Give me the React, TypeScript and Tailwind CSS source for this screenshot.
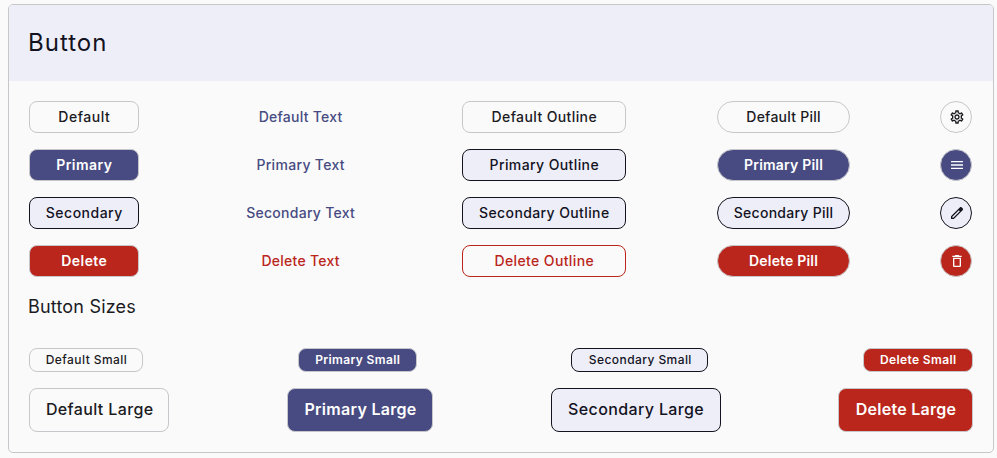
import { useLayoutEffect, useRef, useState } from "react";
import type { ReactNode } from "react";
import { MdDeleteOutline, MdMenu, MdOutlineSettings } from "react-icons/md";

type Tone = "default" | "primary" | "secondary" | "danger";
type Kind = "solid" | "text" | "outline" | "pill";

const SOLID: Record<Tone, string> = {
  default: "border-[#c7c7cb] bg-[#fafafa] font-medium text-[#1b1b1f]",
  primary: "border-[#c7c7cb] bg-[#474b82] font-semibold text-white",
  secondary: "border-[#13131f] bg-[#eeeef8] font-medium text-[#13131f]",
  danger: "border-[#c7c7cb] bg-[#ba261b] font-semibold text-white",
};

const OUTLINE: Record<Tone, string> = {
  default: "border-[#c7c7cb] font-medium text-[#1b1b1f]",
  primary: "border-[#13131f] bg-[#eeeef8] font-medium text-[#13131f]",
  secondary: "border-[#13131f] bg-[#eeeef8] font-medium text-[#13131f]",
  danger: "border-[#ba261b] font-medium text-[#ba261b]",
};

const TEXT: Record<Tone, string> = {
  default: "border-transparent font-medium text-[#474b82]",
  primary: "border-transparent font-medium text-[#474b82]",
  secondary: "border-transparent font-medium text-[#474b82]",
  danger: "border-transparent font-medium text-[#ba261b]",
};

function toneClass(kind: Kind, tone: Tone) {
  if (kind === "text") return TEXT[tone];
  if (kind === "outline") return OUTLINE[tone];
  return SOLID[tone];
}

/* Spreads the letters of a caption evenly over a given width. */
function Caption({ text, width }: { text: string; width: number }) {
  const ref = useRef<HTMLSpanElement>(null);
  const [tracking, setTracking] = useState(0);
  useLayoutEffect(() => {
    if (!ref.current) return;
    const natural = ref.current.getBoundingClientRect().width;
    setTracking((t) => t + (width - natural) / text.length);
  }, [text, width]);
  return (
    <span ref={ref} className="whitespace-nowrap" style={{ letterSpacing: `${tracking}px` }}>
      {text}
    </span>
  );
}

interface Item {
  tone: Tone;
  label: string;
  width: number;
}

const COLUMNS: { kind: Kind; size: string; items: Item[] }[] = [
  {
    kind: "solid",
    size: "w-[109.6px] rounded-lg",
    items: [
      { tone: "default", label: "Default", width: 52 },
      { tone: "primary", label: "Primary", width: 56 },
      { tone: "secondary", label: "Secondary", width: 77 },
      { tone: "danger", label: "Delete", width: 46 },
    ],
  },
  {
    kind: "text",
    size: "w-[141.8px] rounded-lg",
    items: [
      { tone: "default", label: "Default Text", width: 84 },
      { tone: "primary", label: "Primary Text", width: 88.5 },
      { tone: "secondary", label: "Secondary Text", width: 109 },
      { tone: "danger", label: "Delete Text", width: 78.5 },
    ],
  },
  {
    kind: "outline",
    size: "w-[164.2px] rounded-lg",
    items: [
      { tone: "default", label: "Default Outline", width: 105.5 },
      { tone: "primary", label: "Primary Outline", width: 109.5 },
      { tone: "secondary", label: "Secondary Outline", width: 130.5 },
      { tone: "danger", label: "Delete Outline", width: 99.5 },
    ],
  },
  {
    kind: "pill",
    size: "w-[133px] rounded-full",
    items: [
      { tone: "default", label: "Default Pill", width: 74.5 },
      { tone: "primary", label: "Primary Pill", width: 79 },
      { tone: "secondary", label: "Secondary Pill", width: 99.5 },
      { tone: "danger", label: "Delete Pill", width: 69 },
    ],
  },
];

const SMALL: (Item & { size: string })[] = [
  { tone: "default", label: "Default Small", width: 81.5, size: "w-[114px]" },
  { tone: "primary", label: "Primary Small", width: 85, size: "w-[119px]" },
  { tone: "secondary", label: "Secondary Small", width: 103, size: "w-[137px]" },
  { tone: "danger", label: "Delete Small", width: 76.5, size: "w-[109.6px]" },
];

const LARGE: (Item & { size: string })[] = [
  { tone: "default", label: "Default Large", width: 107.5, size: "w-[140.4px]" },
  { tone: "primary", label: "Primary Large", width: 112, size: "w-[145.6px]" },
  { tone: "secondary", label: "Secondary Large", width: 136, size: "w-[170px]" },
  { tone: "danger", label: "Delete Large", width: 100.5, size: "w-[134.2px]" },
];

function PencilIcon() {
  return (
    <svg viewBox="0 -960 960 960" className="size-4" fill="currentColor">
      <path d="M200-200h57l391-391-57-57-391 391v57Zm-80 80v-170l528-527q12-11 26.5-17t30.5-6q16 0 31 6t26 18l55 56q12 11 17.5 26t5.5 30q0 16-5.5 30.5T817-647L290-120H120Zm640-584-56-56 56 56Zm-141 85-28-29 57 57-29-28Z" />
    </svg>
  );
}

const ICONS: { tone: Tone; icon: ReactNode }[] = [
  { tone: "default", icon: <MdOutlineSettings className="size-4" /> },
  { tone: "primary", icon: <MdMenu className="size-4" /> },
  { tone: "secondary", icon: <PencilIcon /> },
  { tone: "danger", icon: <MdDeleteOutline className="size-4" /> },
];

export default function App() {
  return (
    <div className="h-[458px] bg-[#fafafa] pt-1 pl-2 font-[Inter,sans-serif]">
      <section className="h-[449px] w-[985.6px] overflow-hidden rounded-[5px] border border-[#c7c7cb] text-[#1b1b1f]">
        <header className="flex h-[76px] items-center bg-[#eeeef8] px-[19px] text-2xl text-[#13131f]">
          <Caption text="Button" width={79.5} />
        </header>

        <div className="px-5 pt-5">
          <div className="flex justify-between pr-[0.4px]">
            {COLUMNS.map((col) => (
              <div key={col.kind} className="flex flex-col gap-4">
                {col.items.map((b) => (
                  <button
                    key={b.label}
                    className={`flex h-8 items-center justify-center border pl-px text-sm ${col.size} ${toneClass(col.kind, b.tone)}`}
                  >
                    <Caption text={b.label} width={b.width} />
                  </button>
                ))}
              </div>
            ))}
            <div className="flex flex-col gap-4">
              {ICONS.map((b) => (
                <button
                  key={b.tone}
                  className={`flex size-8 items-center justify-center rounded-full border pl-px ${SOLID[b.tone]}`}
                >
                  {b.icon}
                </button>
              ))}
            </div>
          </div>

          <h2 className="mt-4 -ml-px flex h-7 items-center text-lg">
            <Caption text="Button Sizes" width={108} />
          </h2>

          <div className="mt-[27px] flex justify-between">
            {SMALL.map((b) => (
              <button
                key={b.label}
                className={`flex h-6 items-center justify-center rounded-lg border pl-px text-xs ${b.size} ${SOLID[b.tone]}`}
              >
                <Caption text={b.label} width={b.width} />
              </button>
            ))}
          </div>
          <div className="mt-4 flex justify-between">
            {LARGE.map((b) => (
              <button
                key={b.label}
                className={`flex h-11 items-center justify-center rounded-lg border pb-0.5 pl-px text-base ${b.size} ${SOLID[b.tone]}`}
              >
                <Caption text={b.label} width={b.width} />
              </button>
            ))}
          </div>
        </div>
      </section>
    </div>
  );
}
